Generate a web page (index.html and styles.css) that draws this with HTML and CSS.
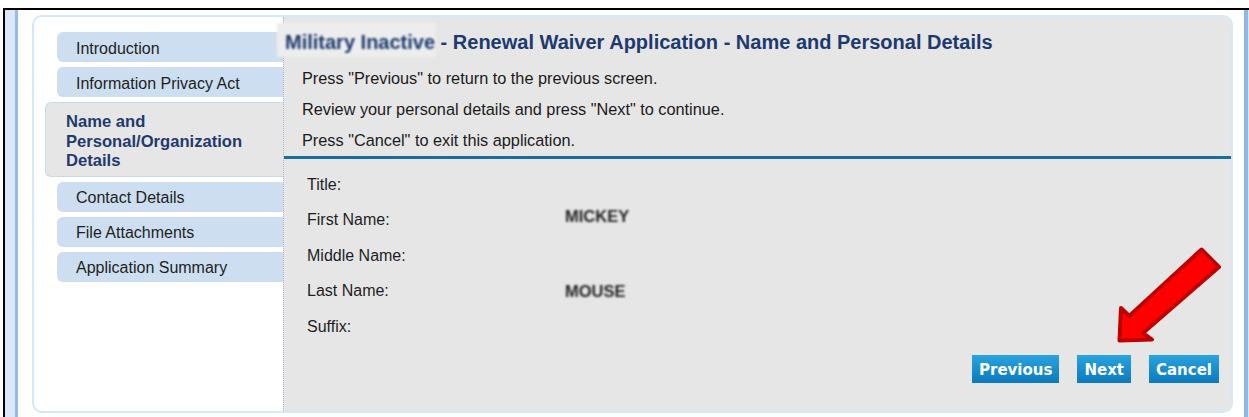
FILE: index.html
```html
<!DOCTYPE html>
<html lang="en">
<head>
<meta charset="utf-8">
<title>Renewal Waiver Application - Name and Personal Details</title>
<link rel="stylesheet" href="styles.css">
</head>
<body>
<div class="screen">
  <div class="rail-left"></div>
  <div class="viewport">
    <div class="card">
      <nav class="steps">
        <div class="step">Introduction</div>
        <div class="step">Information Privacy Act</div>
        <div class="step step-current">Name and Personal/Organization Details</div>
        <div class="step">Contact Details</div>
        <div class="step">File Attachments</div>
        <div class="step">Application Summary</div>
      </nav>
      <section class="panel">
        <h1 class="panel-title"><span class="redacted">Military Inactive</span> - Renewal Waiver Application - Name and Personal Details</h1>
        <div class="hints">
          <p>Press "Previous" to return to the previous screen.</p>
          <p>Review your personal details and press "Next" to continue.</p>
          <p>Press "Cancel" to exit this application.</p>
        </div>
        <div class="rule"></div>
        <div class="fields">
          <div class="label">Title:</div><div class="value"></div>
          <div class="label">First Name:</div><div class="value value-high">MICKEY</div>
          <div class="label">Middle Name:</div><div class="value"></div>
          <div class="label">Last Name:</div><div class="value">MOUSE</div>
          <div class="label">Suffix:</div><div class="value"></div>
        </div>
        <div class="actions">
          <button class="btn" type="button">Previous</button>
          <button class="btn" type="button">Next</button>
          <button class="btn" type="button">Cancel</button>
        </div>
      </section>
    </div>
  </div>
  <div class="rail-right"></div>
</div>
<svg class="pointer" width="120" height="110" viewBox="0 0 120 110" aria-hidden="true">
  <path d="M91.5 9.5 L109 27 L33 93 L42 99.5 L9.5 100.5 L11 68 L19.3 76 Z" fill="#ff0000" stroke="#c00000" stroke-width="4" stroke-linejoin="round"/>
</svg>
</body>
</html>
```

FILE: styles.css
```css
body {
  margin: 0;
  background: #fff;
  font-family: "Liberation Sans", Arial, sans-serif;
  position: relative;
}

/* window frame with the blue rails on either side */
.screen {
  display: flex;
  height: 407px;
  margin: 8px 0 0 3px;
  border-top: 2px solid #000;
  border-left: 2px solid #000;
}

.rail-left {
  flex: none;
  width: 10px;
  background: #dce8fa;
  border-right: 3px solid #93bae8;
}

.viewport {
  flex: 1;
  padding: 5px 11px 0 14px;
}

.rail-right {
  flex: none;
  width: 4px;
  background: #8fb6e8;
  border-right: 1px solid #dce8fa;
}

/* main card: steps list + content panel */
.card {
  box-sizing: border-box;
  height: 398px;
  display: grid;
  grid-template-columns: 249px 1fr;
  background: #fff;
  border: 2px solid #d3e9f5;
  border-radius: 10px;
}

.steps {
  display: flex;
  flex-direction: column;
  gap: 5px;
  padding-top: 15px;
}

.step {
  box-sizing: border-box;
  height: 30px;
  margin-left: 23px;
  padding: 3px 0 0 19px;
  display: flex;
  align-items: center;
  background: #cddef0;
  border-radius: 6px 0 0 6px;
  font-size: 16px;
  color: #1e1e1e;
}

.step-current {
  display: block;
  height: auto;
  margin-left: 11px;
  padding: 9px 10px 5px 20px;
  background: #e6e6e6;
  border: 1px solid #c4dcea;
  border-right: none;
  font-size: 16.6px;
  line-height: 19.5px;
  font-weight: bold;
  color: #1f3a6d;
}

.panel {
  display: flex;
  flex-direction: column;
  background: #e6e6e6;
  border-left: 1px dotted #a5b6d6;
  border-radius: 0 8px 8px 0;
}

.panel-title {
  margin: 0;
  padding: 13px 0 0 1px;
  font-size: 20px;
  line-height: 24px;
  font-weight: bold;
  color: #1d3a6e;
  white-space: nowrap;
}

.redacted {
  display: inline-block;
  margin: -7px -1px -3px -8px;
  padding: 7px 1px 3px 8px;
  background: #ededed;
  filter: blur(0.8px);
}

.hints {
  padding: 9px 0 0 18px;
  font-size: 16.3px;
  line-height: 31px;
  color: #1b1b1b;
}

.hints p {
  margin: 0;
}

.rule {
  height: 3px;
  margin-top: 0;
  background: #1a6c9c;
}

.fields {
  display: grid;
  grid-template-columns: 258px auto;
  grid-auto-rows: 35.5px;
  align-items: center;
  padding: 8px 0 0 23px;
  font-size: 16px;
  color: #1e1e1e;
}

.value {
  font-size: 16.5px;
  font-weight: bold;
  color: #222;
  filter: blur(0.8px);
}

.value-high {
  margin-bottom: 8px;
}

.actions {
  display: flex;
  justify-content: flex-end;
  gap: 18px;
  padding: 10.5px 12px 0 0;
}

.btn {
  height: 28px;
  padding: 2px 7px 0;
  border: 0;
  background: linear-gradient(#29a3de, #0c7abd);
  color: #fff;
  font: bold 15px "DejaVu Sans", Verdana, sans-serif;
}

/* red call-out arrow drawn over the panel */
.pointer {
  position: absolute;
  left: 1110px;
  top: 240px;
}
```
